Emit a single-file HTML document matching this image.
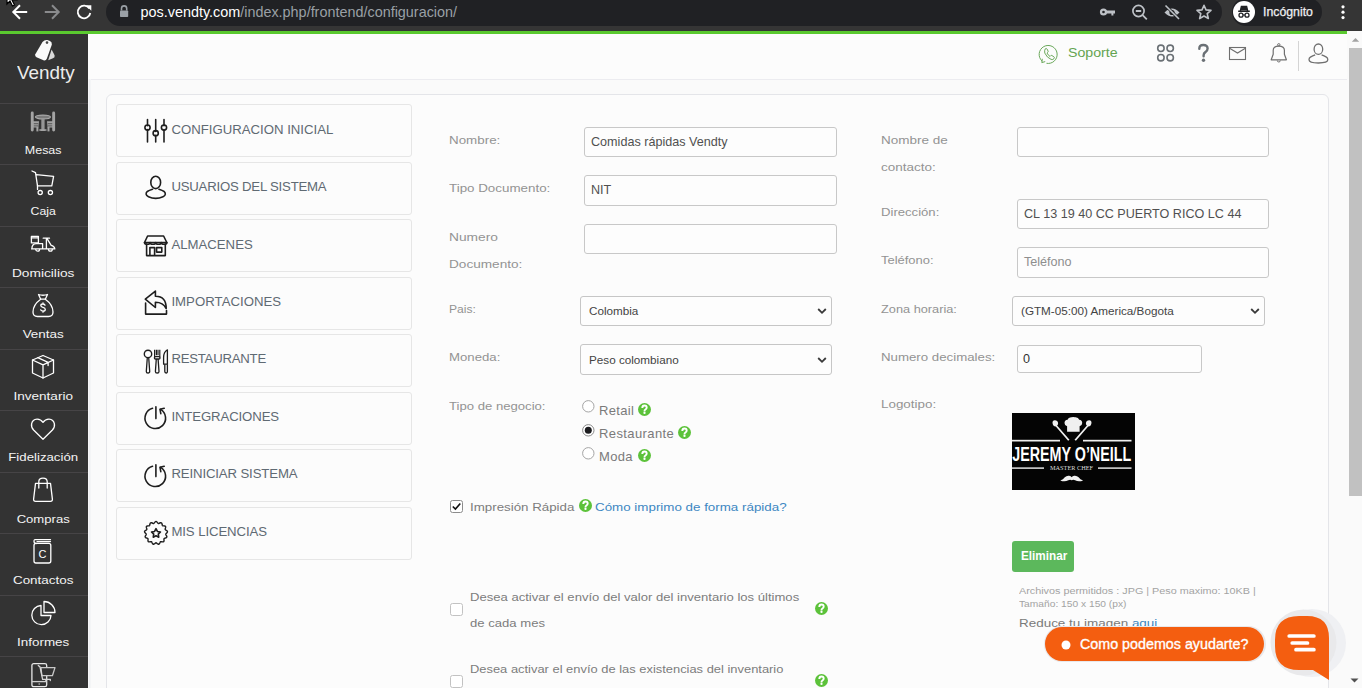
<!DOCTYPE html>
<html><head><meta charset="utf-8"><title>Vendty</title>
<style>
*{box-sizing:border-box;margin:0;padding:0}
html,body{width:1362px;height:688px;overflow:hidden;background:#fafafa;font-family:"Liberation Sans",sans-serif;position:relative}
.r{position:absolute;display:block}
.t{position:absolute;white-space:nowrap}
svg.r{overflow:visible}
</style></head><body>
<div class="r" style="left:0px;top:0px;width:1362px;height:31px;background:#353535"></div>
<div class="r" style="left:106px;top:-2px;width:1116px;height:28px;background:#202124;border-radius:14px"></div>
<svg class="r" style="left:8px;top:0px;" width="24" height="24" viewBox="0 0 24 24"><path d="M19.2 12H5.5M12 5.3L5.3 12 12 18.7" fill="none" stroke="#fff" stroke-width="2"/></svg>
<svg class="r" style="left:40px;top:0px;" width="24" height="24" viewBox="0 0 24 24"><path d="M4.8 12h13.7M12 5.3l6.7 6.7L12 18.7" fill="none" stroke="#8a8b8d" stroke-width="2"/></svg>
<svg class="r" style="left:72px;top:0px;" width="24" height="24" viewBox="0 0 24 24"><path d="M17.4 8.6A6.3 6.3 0 1 0 18.3 13" fill="none" stroke="#fff" stroke-width="1.8"/><path d="M13.8 5.2h5.5v5.5z" fill="#fff"/></svg>
<svg class="r" style="left:2px;top:-9px;" width="16" height="16" viewBox="0 0 16 16"><path d="M5 0v13l3-3 2.5 5 2-1-2.5-5h4.5z" fill="#fff" stroke="#000" stroke-width="1.2"/></svg>
<svg class="r" style="left:118px;top:4px;" width="12" height="14" viewBox="0 0 12 14"><path d="M3.5 6.5V4.5a2.6 2.6 0 0 1 5.2 0v2" fill="none" stroke="#9aa0a6" stroke-width="1.6"/><rect x="2" y="6.5" width="8.2" height="6.6" rx="0.8" fill="#9aa0a6"/></svg>
<div class="t" style="left:140.5px;top:5.31px;font-size:14.4px;line-height:14.4px;color:#9aa0a6;letter-spacing:0px;font-weight:400;"><span style="color:#fff">pos.vendty.com</span>/index.php/frontend/configuracion/</div>
<svg class="r" style="left:1098px;top:2.5px;" width="20" height="18" viewBox="0 0 20 18"><circle cx="5.5" cy="9" r="3.6" fill="#bdc1c6"/><path d="M8 7.6h9v3h-1.6v2h-2v-2H8z" fill="#bdc1c6"/><circle cx="5.5" cy="9" r="1.3" fill="#202124"/></svg>
<svg class="r" style="left:1130px;top:1.5px;" width="20" height="20" viewBox="0 0 20 20"><circle cx="8.5" cy="9" r="5.6" fill="none" stroke="#bdc1c6" stroke-width="1.7"/><path d="M5.8 9h5.4M12.6 13.2l4.2 4.2" stroke="#bdc1c6" stroke-width="1.8"/></svg>
<svg class="r" style="left:1162px;top:1.5px;" width="20" height="20" viewBox="0 0 20 20"><path d="M2.5 10.5Q10 2.5 17.5 10.5Q10 18.5 2.5 10.5z" fill="#bdc1c6"/><circle cx="10" cy="10.5" r="2.6" fill="#202124"/><path d="M3.5 3.5l13.5 13.5" stroke="#202124" stroke-width="3"/><path d="M3.5 3.5l13.5 13.5" stroke="#bdc1c6" stroke-width="1.6"/></svg>
<svg class="r" style="left:1193px;top:1px;" width="22" height="22" viewBox="0 0 22 22"><path d="M11 4.3l2 4.6 5 .45-3.8 3.3 1.15 4.9L11 15l-4.35 2.55 1.15-4.9-3.8-3.3 5-.45z" fill="none" stroke="#bdc1c6" stroke-width="1.6" stroke-linejoin="round"/></svg>
<div class="r" style="left:1232px;top:-2px;width:90px;height:28px;background:#202124;border-radius:14px"></div>
<svg class="r" style="left:1233px;top:1px;" width="22" height="22" viewBox="0 0 22 22"><circle cx="11" cy="11" r="11" fill="#fff"/><path d="M5.2 10.2h11.6M7.4 9.6l1-4.2h5.2l1 4.2" stroke="#202124" stroke-width="1.4" fill="#202124"/><circle cx="8" cy="14.2" r="2" fill="none" stroke="#202124" stroke-width="1.3"/><circle cx="14" cy="14.2" r="2" fill="none" stroke="#202124" stroke-width="1.3"/><path d="M10 14h2" stroke="#202124" stroke-width="1.2"/></svg>
<div class="t" style="left:1263px;top:5.79px;font-size:12.3px;line-height:12.3px;color:#eeeff1;letter-spacing:0px;font-weight:400;-webkit-text-stroke:0.25px #eeeff1;">Incógnito</div>
<svg class="r" style="left:1338.5px;top:0px;" width="8" height="24" viewBox="0 0 8 24"><circle cx="4" cy="6.8" r="1.6" fill="#fff"/><circle cx="4" cy="12.2" r="1.6" fill="#fff"/><circle cx="4" cy="17.6" r="1.6" fill="#fff"/></svg>
<div class="r" style="left:0px;top:31px;width:1347px;height:3px;background:#5ac92f"></div>
<div class="r" style="left:1347px;top:31px;width:15px;height:3px;background:#fafafa"></div>
<div class="r" style="left:88px;top:34px;width:1259px;height:654px;background:#fafafa"></div>
<div class="r" style="left:88px;top:34px;width:1259px;height:45px;background:#fcfcfc"></div>
<div class="r" style="left:88px;top:79px;width:1259px;height:1px;background:#ececf0"></div>
<div class="r" style="left:106px;top:94px;width:1223px;height:620px;border:1px solid #e4e5e9;border-radius:6px;background:#fcfcfc"></div>
<div class="r" style="left:88px;top:79px;width:3px;height:609px;background:linear-gradient(90deg,#fafafa,#eceef1 60%,#fafafa)"></div>
<div class="r" style="left:1347px;top:31px;width:15px;height:657px;background:#fafafa"></div>
<div class="r" style="left:1349px;top:48px;width:13px;height:448px;background:#c1c1c1"></div>
<svg class="r" style="left:1348px;top:32px;" width="15" height="14" viewBox="0 0 15 14"><path d="M3.8 9.8L7.5 6.1 11.2 9.8z" fill="#a3a3a3"/></svg>
<svg class="r" style="left:1347px;top:674px;" width="15" height="14" viewBox="0 0 15 14"><path d="M3.5 4.5L7.5 8.5 11.5 4.5z" fill="#505050"/></svg>
<div class="r" style="left:0px;top:34px;width:88px;height:654px;background:#333333"></div>
<svg class="r" style="left:33px;top:38px;" width="26" height="26" viewBox="0 0 26 26"><path d="M18.6 11.5L21.6 17.2Q22.2 19.5 20 20.3L15.2 22.3z" fill="#d9d9d9"/><path d="M9.5 4Q11.5 1.6 14.3 2L17 3Q19.3 4.2 18.8 6.8L13.8 20.8Q12.8 23 10.5 22.3L3.5 19.3Q1.6 18.4 2.3 16.3z" fill="#fafafa"/><circle cx="14" cy="4.6" r="1.3" fill="#444"/></svg>
<div class="t" id="t3" style="left:17px;top:63.72px;font-size:18.4px;line-height:18.4px;color:#ececec;letter-spacing:0px;font-weight:400;transform-origin:0 0;transform:scaleX(1.0276)">Vendty</div>
<div class="r" style="left:0px;top:103px;width:88px;height:1px;background:#464446"></div>
<div class="t" id="t4" style="left:0;width:86.4px;text-align:center;top:144.57px;font-size:11.5px;line-height:11.5px;color:#f4f4f4;transform-origin:50% 0;transform:scaleX(1.0834)">Mesas</div>
<div class="r" style="left:0px;top:164px;width:88px;height:1px;background:#464446"></div>
<div class="t" id="t5" style="left:0;width:86.4px;text-align:center;top:205.57px;font-size:11.5px;line-height:11.5px;color:#f4f4f4;transform-origin:50% 0;transform:scaleX(1.0653)">Caja</div>
<div class="r" style="left:0px;top:226px;width:88px;height:1px;background:#464446"></div>
<div class="t" id="t6" style="left:0;width:86.4px;text-align:center;top:267.57px;font-size:11.5px;line-height:11.5px;color:#f4f4f4;transform-origin:50% 0;transform:scaleX(1.1926)">Domicilios</div>
<div class="r" style="left:0px;top:287px;width:88px;height:1px;background:#464446"></div>
<div class="t" id="t7" style="left:0;width:86.4px;text-align:center;top:328.57px;font-size:11.5px;line-height:11.5px;color:#f4f4f4;transform-origin:50% 0;transform:scaleX(1.1685)">Ventas</div>
<div class="r" style="left:0px;top:349px;width:88px;height:1px;background:#464446"></div>
<div class="t" id="t8" style="left:0;width:86.4px;text-align:center;top:390.57px;font-size:11.5px;line-height:11.5px;color:#f4f4f4;transform-origin:50% 0;transform:scaleX(1.1798)">Inventario</div>
<div class="r" style="left:0px;top:410px;width:88px;height:1px;background:#464446"></div>
<div class="t" id="t9" style="left:0;width:86.4px;text-align:center;top:451.57px;font-size:11.5px;line-height:11.5px;color:#f4f4f4;transform-origin:50% 0;transform:scaleX(1.1493)">Fidelización</div>
<div class="r" style="left:0px;top:472px;width:88px;height:1px;background:#464446"></div>
<div class="t" id="t10" style="left:0;width:86.4px;text-align:center;top:513.57px;font-size:11.5px;line-height:11.5px;color:#f4f4f4;transform-origin:50% 0;transform:scaleX(1.1381)">Compras</div>
<div class="r" style="left:0px;top:533px;width:88px;height:1px;background:#464446"></div>
<div class="t" id="t11" style="left:0;width:86.4px;text-align:center;top:574.57px;font-size:11.5px;line-height:11.5px;color:#f4f4f4;transform-origin:50% 0;transform:scaleX(1.1684)">Contactos</div>
<div class="r" style="left:0px;top:595px;width:88px;height:1px;background:#464446"></div>
<div class="t" id="t12" style="left:0;width:86.4px;text-align:center;top:636.57px;font-size:11.5px;line-height:11.5px;color:#f4f4f4;transform-origin:50% 0;transform:scaleX(1.1665)">Informes</div>
<div class="r" style="left:0px;top:656px;width:88px;height:1px;background:#464446"></div>
<svg class="r" style="left:30px;top:110px;" width="26" height="23" viewBox="0 0 26 23"><g fill="#a4a4a4"><ellipse cx="12.9" cy="7" rx="7.5" ry="1.9" fill="#7a7a7a" stroke="#a8a8a8" stroke-width="1.2"/><rect x="11.3" y="8.5" width="3.3" height="11" fill="#959595"/><ellipse cx="12.9" cy="20" rx="3.9" ry="1.1"/><rect x="0.8" y="1.5" width="2.9" height="20" rx="1.4"/><path d="M2 11.2h7l-.6 6.3H2z"/><rect x="6.4" y="17" width="2" height="4.4"/><rect x="22.2" y="1.5" width="2.9" height="20" rx="1.4"/><path d="M24 11.2h-7l.6 6.3H24z"/><rect x="17.5" y="17" width="2" height="4.4"/></g><g fill="#4a4a4a"><rect x="3.8" y="13.3" width="4.5" height="0.9"/><rect x="17.7" y="13.3" width="4.5" height="0.9"/><rect x="3.8" y="15.5" width="4.5" height="0.8"/><rect x="17.7" y="15.5" width="4.5" height="0.8"/></g></svg>
<svg class="r" style="left:30px;top:169px;" width="26" height="28" viewBox="0 0 26 28"><path d="M2 2l3.5 1.6 2 13.2h14.3l1.8-9.4L6.3 5.6" stroke="#fff" stroke-width="1.3" fill="none" stroke-linejoin="round" stroke-linecap="round"/><path d="M7.5 16.8v3.6" stroke="#fff" stroke-width="1.3" fill="none" stroke-linejoin="round" stroke-linecap="round"/><circle cx="10.2" cy="23.6" r="2.1" stroke="#fff" stroke-width="1.3" fill="none" stroke-linejoin="round" stroke-linecap="round"/><circle cx="20.4" cy="23.6" r="2.1" stroke="#fff" stroke-width="1.3" fill="none" stroke-linejoin="round" stroke-linecap="round"/></svg>
<svg class="r" style="left:30px;top:234px;" width="26" height="21" viewBox="0 0 26 21"><rect x="1.4" y="2.3" width="7" height="6.6" stroke="#fff" stroke-width="1.3" fill="none" stroke-linejoin="round" stroke-linecap="round"/><path d="M1.4 3.9h7" stroke="#fff" stroke-width="1.3" fill="none" stroke-linejoin="round" stroke-linecap="round"/><path d="M1.9 14.9Q1.9 9.7 6.2 9.7H12.6V14.9M1.6 14.9H24.8M16.4 14.9V4.3M13.2 4.2H19.5M17.2 4.8L21.2 11.4Q24.4 12.1 24.8 14.9" stroke="#fff" stroke-width="1.3" fill="none" stroke-linejoin="round" stroke-linecap="round"/><path d="M5.8 15.3a1.9 1.9 0 0 0 3.8 0M18.5 15.3a1.9 1.9 0 0 0 3.8 0" stroke="#fff" stroke-width="1.3" fill="none" stroke-linejoin="round" stroke-linecap="round"/></svg>
<svg class="r" style="left:31px;top:292px;" width="24" height="28" viewBox="0 0 24 28"><path d="M7.5 2.5q4.5 1.5 9 0l-2.2 4.7h-4.6z" stroke="#fff" stroke-width="1.3" fill="none" stroke-linejoin="round" stroke-linecap="round"/><path d="M9.7 7.2q-7.7 5.5-7.7 12.8q0 4.5 4.5 4.5h11q4.5 0 4.5-4.5q0-7.3-7.7-12.8" stroke="#fff" stroke-width="1.3" fill="none" stroke-linejoin="round" stroke-linecap="round"/><path d="M14 13.2q-.8-1.2-2.2-1.2q-2 0-2 1.6q0 1.3 2.2 1.8q2.3.5 2.3 2q0 1.7-2.3 1.7q-1.5 0-2.3-1.2M12 10.8v1.2M12 18.9v1.3" stroke="#fff" stroke-width="1.3" fill="none" stroke-linejoin="round" stroke-linecap="round"/></svg>
<svg class="r" style="left:30px;top:353px;" width="26" height="29" viewBox="0 0 26 29"><path d="M13 2.5l10.5 4.5v13l-10.5 5-10.5-5V7z" stroke="#fff" stroke-width="1.3" fill="none" stroke-linejoin="round" stroke-linecap="round"/><path d="M2.5 7l10.5 4.8 10.5-4.8M13 11.8v13.2M7.8 4.7l10.3 4.6v3.2" stroke="#fff" stroke-width="1.3" fill="none" stroke-linejoin="round" stroke-linecap="round"/></svg>
<svg class="r" style="left:30px;top:417px;" width="26" height="25" viewBox="0 0 26 25"><path d="M13 22.3L3.6 13Q1 10.2 1.6 6.8Q2.5 2.3 7 2.1q3.7-.1 6 3.3q2.3-3.4 6-3.3q4.5.2 5.4 4.7q.6 3.4-2 6.2z" stroke="#fff" stroke-width="1.3" fill="none" stroke-linejoin="round" stroke-linecap="round"/></svg>
<svg class="r" style="left:30px;top:476px;" width="26" height="29" viewBox="0 0 26 29"><path d="M5.5 7.3h15l1.9 15.8q.2 2.2-2 2.2H5.6q-2.2 0-2-2.2z" stroke="#fff" stroke-width="1.3" fill="none" stroke-linejoin="round" stroke-linecap="round"/><path d="M8.8 12V5.8q0-3.6 4.2-3.6t4.2 3.6V12" stroke="#fff" stroke-width="1.3" fill="none" stroke-linejoin="round" stroke-linecap="round"/></svg>
<svg class="r" style="left:30px;top:538px;" width="26" height="28" viewBox="0 0 26 28"><path d="M6.3 5.5q-2.3 0-2.3-2.2t2.3-1.6h14.2M7 3.6h13.5" stroke="#fff" stroke-width="1.3" fill="none" stroke-linejoin="round" stroke-linecap="round"/><rect x="4" y="5.4" width="16.8" height="19.6" rx="2" stroke="#fff" stroke-width="1.3" fill="none" stroke-linejoin="round" stroke-linecap="round"/><text x="12.4" y="19.6" font-family="Liberation Sans" font-size="11" fill="#fff" text-anchor="middle">C</text></svg>
<svg class="r" style="left:29px;top:599px;" width="28" height="29" viewBox="0 0 28 29"><path d="M12 6.5a9.6 9.6 0 1 0 10 10H12z" stroke="#fff" stroke-width="1.3" fill="none" stroke-linejoin="round" stroke-linecap="round"/><path d="M15 2.5v11h11a11 11 0 0 0-11-11z" stroke="#fff" stroke-width="1.3" fill="none" stroke-linejoin="round" stroke-linecap="round"/></svg>
<svg class="r" style="left:29px;top:661px;" width="28" height="28" viewBox="0 0 28 28"><rect x="2.9" y="2.7" width="14.8" height="23" rx="1.8" fill="none" stroke="#e6e6e6" stroke-width="1.3"/><path d="M2.9 20.6h14.8" stroke="#d0d0d0" stroke-width="1.3"/><circle cx="10.2" cy="23" r="0.8" fill="#bbb"/><path d="M11.9 6.6H26l-2.6 8.1H12.9z" fill="#333" stroke="#c9c9c9" stroke-width="1.3" stroke-linejoin="round"/><path d="M9.3 4.5l1.7 1.4 2.6 12.4h7.8M16.8 18.3v1.2M21.3 18.3v1.2" fill="none" stroke="#d6d6d6" stroke-width="1.3" stroke-linecap="round"/></svg>
<svg class="r" style="left:1037px;top:42px;" width="24" height="24" viewBox="0 0 24 24"><path d="M5.2 19.2A9 9 0 1 1 9.5 21.3" fill="none" stroke="#6aa85a" stroke-width="1"/><path d="M5.3 16.8l-.5 3.8 3.4-1" fill="none" stroke="#6aa85a" stroke-width="1"/><path d="M8.3 6.8q1.2-.8 1.8.3l1 2q.3.8-.5 1.4l-.6.5q.8 2 3 3.4l.6-.6q.6-.7 1.4-.2l1.9 1.2q.9.7.2 1.7q-1.2 1.6-3 .9q-4.2-1.7-6.3-6.3q-.6-2.6 .5-4.3z" fill="none" stroke="#6aa85a" stroke-width="1"/></svg>
<div class="t" id="t13" style="left:1068.0px;top:47.30px;font-size:12.4px;line-height:12.4px;color:#64a451;letter-spacing:0px;font-weight:400;transform-origin:0 0;transform:scaleX(1.1427)">Soporte</div>
<svg class="r" style="left:1155px;top:43px;" width="22" height="22" viewBox="0 0 22 22"><g fill="none" stroke="#6a7075" stroke-width="1.6"><circle cx="5.9" cy="5.3" r="3.2"/><circle cx="15.2" cy="5.3" r="3.2"/><circle cx="5.9" cy="14.7" r="3.2"/><circle cx="15.2" cy="14.7" r="3.2"/></g></svg>
<svg class="r" style="left:1195px;top:42px;" width="16" height="22" viewBox="0 0 16 22"><path d="M4.3 6.8q0-3.8 4-3.8q4.3 0 4.3 3.6q0 2.2-2.2 3.5q-1.8 1.1-1.8 3.2v.9" fill="none" stroke="#6a7075" stroke-width="2.4" stroke-linecap="round"/><circle cx="8.5" cy="18.3" r="1.7" fill="#6a7075"/></svg>
<svg class="r" style="left:1227px;top:45px;" width="22" height="17" viewBox="0 0 22 17"><rect x="2.5" y="2.5" width="16" height="12" fill="none" stroke="#6f6f6f" stroke-width="1.1"/><path d="M2.6 3.2l7.9 4.8 7.9-4.8" fill="none" stroke="#6f6f6f" stroke-width="1.1"/></svg>
<svg class="r" style="left:1268px;top:42px;" width="22" height="24" viewBox="0 0 22 24"><path d="M3.2 17.8l2-5.5v-4q0-4.2 5.6-4.2t5.6 4.2v4l2 5.5z" fill="none" stroke="#6f6f6f" stroke-width="1.2" stroke-linejoin="round"/><circle cx="10.8" cy="2.8" r="1.2" fill="none" stroke="#6f6f6f" stroke-width="1"/><path d="M9.3 18.5a1.5 1.5 0 0 0 3 0" fill="none" stroke="#6f6f6f" stroke-width="1"/></svg>
<div class="r" style="left:1298px;top:41px;width:1px;height:30px;background:#d4d4d4"></div>
<svg class="r" style="left:1306px;top:42px;" width="24" height="24" viewBox="0 0 24 24"><ellipse cx="12.4" cy="7.2" rx="4.3" ry="5.2" fill="none" stroke="#6f6f6f" stroke-width="1.3"/><path d="M9.2 12.9q-2.6 1-4.8 2.2q-1.4.8-1.4 2.7q0 3.2 9.4 3.2t9.4-3.2q0-1.9-1.4-2.7q-2.2-1.2-4.8-2.2" fill="none" stroke="#6f6f6f" stroke-width="1.3"/></svg>
<div class="r" style="left:116px;top:104px;width:296px;height:53px;border:1px solid #e6e6e6;border-radius:3px;background:#fcfcfc"></div>
<div class="t" style="left:171.4px;top:122.73px;font-size:13.2px;line-height:13.2px;color:#5f6a73;letter-spacing:0px;font-weight:400;">CONFIGURACION INICIAL</div>
<div class="r" style="left:116px;top:162px;width:296px;height:53px;border:1px solid #e6e6e6;border-radius:3px;background:#fcfcfc"></div>
<div class="t" style="left:171.4px;top:180.16px;font-size:13.2px;line-height:13.2px;color:#5f6a73;letter-spacing:-0.21px;font-weight:400;">USUARIOS DEL SISTEMA</div>
<div class="r" style="left:116px;top:219px;width:296px;height:53px;border:1px solid #e6e6e6;border-radius:3px;background:#fcfcfc"></div>
<div class="t" style="left:171.4px;top:237.59px;font-size:13.2px;line-height:13.2px;color:#5f6a73;letter-spacing:0px;font-weight:400;">ALMACENES</div>
<div class="r" style="left:116px;top:277px;width:296px;height:53px;border:1px solid #e6e6e6;border-radius:3px;background:#fcfcfc"></div>
<div class="t" style="left:171.4px;top:295.02px;font-size:13.2px;line-height:13.2px;color:#5f6a73;letter-spacing:0.03px;font-weight:400;">IMPORTACIONES</div>
<div class="r" style="left:116px;top:334px;width:296px;height:53px;border:1px solid #e6e6e6;border-radius:3px;background:#fcfcfc"></div>
<div class="t" style="left:171.4px;top:352.45px;font-size:13.2px;line-height:13.2px;color:#5f6a73;letter-spacing:-0.24px;font-weight:400;">RESTAURANTE</div>
<div class="r" style="left:116px;top:392px;width:296px;height:53px;border:1px solid #e6e6e6;border-radius:3px;background:#fcfcfc"></div>
<div class="t" style="left:171.4px;top:409.88px;font-size:13.2px;line-height:13.2px;color:#5f6a73;letter-spacing:-0.12px;font-weight:400;">INTEGRACIONES</div>
<div class="r" style="left:116px;top:449px;width:296px;height:53px;border:1px solid #e6e6e6;border-radius:3px;background:#fcfcfc"></div>
<div class="t" style="left:171.4px;top:467.31px;font-size:13.2px;line-height:13.2px;color:#5f6a73;letter-spacing:-0.13px;font-weight:400;">REINICIAR SISTEMA</div>
<div class="r" style="left:116px;top:507px;width:296px;height:53px;border:1px solid #e6e6e6;border-radius:3px;background:#fcfcfc"></div>
<div class="t" style="left:171.4px;top:524.74px;font-size:13.2px;line-height:13.2px;color:#5f6a73;letter-spacing:-0.09px;font-weight:400;">MIS LICENCIAS</div>
<svg class="r" style="left:144px;top:118.5px;overflow:visible" width="25" height="25" viewBox="0 0 25 25"><path d="M3.5 0.5v6.2M3.5 10.5v12.5M11.7 0.5v12M11.7 16.2v6.8M20 0.5v6.2M20 10.5v12.5" fill="none" stroke="#1e1e1e" stroke-width="1.6" stroke-linecap="round" stroke-linejoin="round"/><circle cx="3.5" cy="8.6" r="2.6" fill="none" stroke="#1e1e1e" stroke-width="1.6" stroke-linecap="round" stroke-linejoin="round"/><circle cx="11.7" cy="14.2" r="2.6" fill="none" stroke="#1e1e1e" stroke-width="1.6" stroke-linecap="round" stroke-linejoin="round"/><circle cx="20" cy="8.6" r="2.6" fill="none" stroke="#1e1e1e" stroke-width="1.6" stroke-linecap="round" stroke-linejoin="round"/></svg>
<svg class="r" style="left:144px;top:176px;overflow:visible" width="25" height="25" viewBox="0 0 25 25"><ellipse cx="11.7" cy="6.4" rx="4.9" ry="6.2" fill="none" stroke="#1e1e1e" stroke-width="1.6" stroke-linecap="round" stroke-linejoin="round"/><path d="M8.5 13.3Q5 14.5 3.3 15.5Q2 16.3 2.1 18.2Q2.3 19.8 4.5 20.8Q8 22.4 11.7 22.4T19 20.8Q21.2 19.8 21.3 18.2Q21.4 16.3 20.1 15.5Q18.4 14.5 15 13.3" fill="none" stroke="#1e1e1e" stroke-width="1.6" stroke-linecap="round" stroke-linejoin="round"/></svg>
<svg class="r" style="left:144px;top:233.5px;overflow:visible" width="25" height="25" viewBox="0 0 25 25"><path d="M3.6 2h16l3.2 6.5H0.5z" fill="none" stroke="#1e1e1e" stroke-width="1.6" stroke-linecap="round" stroke-linejoin="round"/><path d="M0.5 8.5q0 1.8 2.8 1.8t2.8-1.8q0 1.8 2.8 1.8t2.8-1.8q0 1.8 2.8 1.8t2.8-1.8q0 1.8 2.8 1.8t2.8-1.8" fill="none" stroke="#1e1e1e" stroke-width="1.6" stroke-linecap="round" stroke-linejoin="round"/><path d="M2.6 10v11.6h18.7V10M5.9 21.6v-8h4.7v8M12.6 13.6h5.2v4.5h-5.2z" fill="none" stroke="#1e1e1e" stroke-width="1.6" stroke-linecap="round" stroke-linejoin="round"/></svg>
<svg class="r" style="left:144px;top:291px;overflow:visible" width="25" height="25" viewBox="0 0 25 25"><path d="M1.3 8.2L11.4 0.1v5.2q10.8-.2 10.8 12.3q-3-6.3-10.8-6.3v5.2z" fill="none" stroke="#1e1e1e" stroke-width="1.6" stroke-linecap="round" stroke-linejoin="round"/><path d="M1.6 12v11.1h20.9v-3.6" fill="none" stroke="#1e1e1e" stroke-width="1.6" stroke-linecap="round" stroke-linejoin="round"/></svg>
<svg class="r" style="left:144px;top:348.5px;overflow:visible" width="25" height="25" viewBox="0 0 25 25"><circle cx="4" cy="4.9" r="3.7" fill="none" stroke="#1e1e1e" stroke-width="1.4"/><path d="M3.3 8.7L2.3 22.4Q2.3 24 4 24T5.7 22.4L4.7 8.7" fill="none" stroke="#1e1e1e" stroke-width="1.3" stroke-linejoin="round"/><path d="M10.6 0.8v7.4M15.8 0.8v7.4M12.4 0.8v5.5M14 0.8v5.5" fill="none" stroke="#1e1e1e" stroke-width="1.2"/><rect x="10.4" y="7.6" width="5.6" height="2.4" rx="1.1" fill="none" stroke="#1e1e1e" stroke-width="1.3"/><path d="M12.3 10L11.4 22.4Q11.4 24 13.2 24T15 22.4L14.1 10" fill="none" stroke="#1e1e1e" stroke-width="1.3" stroke-linejoin="round"/><path d="M23.4 0.8Q19.6 3 19.6 8.5V15.2H23.4z" fill="none" stroke="#1e1e1e" stroke-width="1.3" stroke-linejoin="round"/><path d="M20.8 15.2V22.6Q20.8 24 22.1 24T23.4 22.6V15.2" fill="none" stroke="#1e1e1e" stroke-width="1.3" stroke-linejoin="round"/></svg>
<svg class="r" style="left:144px;top:406px;overflow:visible" width="25" height="25" viewBox="0 0 25 25"><path d="M11.9 0.8v11.8" fill="none" stroke="#1e1e1e" stroke-width="1.6" stroke-linecap="round" stroke-linejoin="round"/><path d="M8.5 2.3A10.3 10.3 0 1 0 16.6 3.4" fill="none" stroke="#1e1e1e" stroke-width="1.6" stroke-linecap="round" stroke-linejoin="round"/><path d="M20.2 2.3l-4.2 1 .8 4.3" fill="none" stroke="#1e1e1e" stroke-width="1.6" stroke-linecap="round" stroke-linejoin="round"/></svg>
<svg class="r" style="left:144px;top:463.5px;overflow:visible" width="25" height="25" viewBox="0 0 25 25"><path d="M11.9 0.8v11.8" fill="none" stroke="#1e1e1e" stroke-width="1.6" stroke-linecap="round" stroke-linejoin="round"/><path d="M8.5 2.3A10.3 10.3 0 1 0 16.6 3.4" fill="none" stroke="#1e1e1e" stroke-width="1.6" stroke-linecap="round" stroke-linejoin="round"/><path d="M20.2 2.3l-4.2 1 .8 4.3" fill="none" stroke="#1e1e1e" stroke-width="1.6" stroke-linecap="round" stroke-linejoin="round"/></svg>
<svg class="r" style="left:144px;top:521px;overflow:visible" width="25" height="25" viewBox="0 0 25 25"><path d="M12.00 0.45 L12.46 0.57 L12.90 0.91 L13.29 1.38 L13.65 1.86 L13.99 2.24 L14.36 2.44 L14.77 2.43 L15.25 2.25 L15.79 2.00 L16.36 1.77 L16.90 1.67 L17.37 1.77 L17.72 2.10 L17.95 2.60 L18.08 3.19 L18.17 3.79 L18.30 4.28 L18.53 4.63 L18.90 4.81 L19.41 4.88 L20.01 4.90 L20.62 4.96 L21.14 5.13 L21.51 5.44 L21.67 5.89 L21.63 6.44 L21.47 7.03 L21.28 7.60 L21.17 8.09 L21.21 8.51 L21.45 8.84 L21.87 9.14 L22.39 9.44 L22.90 9.77 L23.29 10.17 L23.47 10.61 L23.40 11.08 L23.12 11.55 L22.70 12.00 L22.27 12.41 L21.93 12.80 L21.78 13.19 L21.83 13.60 L22.07 14.06 L22.39 14.56 L22.69 15.10 L22.85 15.62 L22.80 16.10 L22.52 16.48 L22.05 16.77 L21.47 16.97 L20.90 17.14 L20.42 17.33 L20.11 17.60 L19.97 17.99 L19.96 18.50 L20.01 19.10 L20.02 19.71 L19.92 20.25 L19.66 20.65 L19.23 20.86 L18.68 20.89 L18.08 20.81 L17.49 20.68 L16.98 20.63 L16.58 20.72 L16.27 21.00 L16.03 21.45 L15.79 22.00 L15.52 22.55 L15.18 22.98 L14.76 23.21 L14.29 23.21 L13.78 22.98 L13.29 22.62 L12.83 22.24 L12.40 21.96 L12.00 21.85 L11.60 21.96 L11.17 22.24 L10.71 22.62 L10.22 22.98 L9.71 23.21 L9.24 23.21 L8.82 22.98 L8.48 22.55 L8.21 22.00 L7.97 21.45 L7.73 21.00 L7.42 20.72 L7.02 20.63 L6.51 20.68 L5.92 20.81 L5.32 20.89 L4.77 20.86 L4.34 20.65 L4.08 20.25 L3.98 19.71 L3.99 19.10 L4.04 18.50 L4.03 17.99 L3.89 17.60 L3.58 17.33 L3.10 17.14 L2.53 16.97 L1.95 16.77 L1.48 16.48 L1.20 16.10 L1.15 15.62 L1.31 15.10 L1.61 14.56 L1.93 14.06 L2.17 13.60 L2.22 13.19 L2.07 12.80 L1.73 12.41 L1.30 12.00 L0.88 11.55 L0.60 11.08 L0.53 10.61 L0.71 10.17 L1.10 9.77 L1.61 9.44 L2.13 9.14 L2.55 8.84 L2.79 8.51 L2.83 8.09 L2.72 7.60 L2.53 7.03 L2.37 6.44 L2.33 5.89 L2.49 5.44 L2.86 5.13 L3.38 4.96 L3.99 4.90 L4.59 4.88 L5.10 4.81 L5.47 4.63 L5.70 4.28 L5.83 3.79 L5.92 3.19 L6.05 2.60 L6.28 2.10 L6.63 1.77 L7.10 1.67 L7.64 1.77 L8.21 2.00 L8.75 2.25 L9.23 2.43 L9.64 2.44 L10.01 2.24 L10.35 1.86 L10.71 1.38 L11.10 0.91 L11.54 0.57 L12.00 0.45z" fill="none" stroke="#1e1e1e" stroke-width="1.4"/><path d="M12.00 7.70 L13.41 10.46 L16.47 10.95 L14.28 13.14 L14.76 16.20 L12.00 14.80 L9.24 16.20 L9.72 13.14 L7.53 10.95 L10.59 10.46z" fill="none" stroke="#1e1e1e" stroke-width="1.6" stroke-linejoin="round"/></svg>
<div class="t" id="t22" style="left:448.8px;top:134.69px;font-size:11px;line-height:11px;color:#939393;letter-spacing:0px;font-weight:400;transform-origin:0 0;transform:scaleX(1.2160)">Nombre:</div>
<div class="t" id="t23" style="left:448.8px;top:183.09px;font-size:11px;line-height:11px;color:#939393;letter-spacing:0px;font-weight:400;transform-origin:0 0;transform:scaleX(1.2152)">Tipo Documento:</div>
<div class="t" id="t24" style="left:448.8px;top:231.89px;font-size:11px;line-height:11px;color:#939393;letter-spacing:0px;font-weight:400;transform-origin:0 0;transform:scaleX(1.2524)">Numero</div>
<div class="t" id="t25" style="left:448.8px;top:258.69px;font-size:11px;line-height:11px;color:#939393;letter-spacing:0px;font-weight:400;transform-origin:0 0;transform:scaleX(1.2375)">Documento:</div>
<div class="t" id="t26" style="left:448.8px;top:303.69px;font-size:11px;line-height:11px;color:#939393;letter-spacing:0px;font-weight:400;transform-origin:0 0;transform:scaleX(1.0994)">Pais:</div>
<div class="t" id="t27" style="left:448.8px;top:351.69px;font-size:11px;line-height:11px;color:#939393;letter-spacing:0px;font-weight:400;transform-origin:0 0;transform:scaleX(1.1982)">Moneda:</div>
<div class="t" id="t28" style="left:448.8px;top:401.29px;font-size:11px;line-height:11px;color:#939393;letter-spacing:0px;font-weight:400;transform-origin:0 0;transform:scaleX(1.1923)">Tipo de negocio:</div>
<div class="t" id="t29" style="left:881.2px;top:134.69px;font-size:11px;line-height:11px;color:#939393;letter-spacing:0px;font-weight:400;transform-origin:0 0;transform:scaleX(1.2274)">Nombre de</div>
<div class="t" id="t30" style="left:881.2px;top:161.69px;font-size:11px;line-height:11px;color:#939393;letter-spacing:0px;font-weight:400;transform-origin:0 0;transform:scaleX(1.2253)">contacto:</div>
<div class="t" id="t31" style="left:881.2px;top:206.69px;font-size:11px;line-height:11px;color:#939393;letter-spacing:0px;font-weight:400;transform-origin:0 0;transform:scaleX(1.1921)">Dirección:</div>
<div class="t" id="t32" style="left:881.2px;top:254.69px;font-size:11px;line-height:11px;color:#939393;letter-spacing:0px;font-weight:400;transform-origin:0 0;transform:scaleX(1.1779)">Teléfono:</div>
<div class="t" id="t33" style="left:881.2px;top:303.69px;font-size:11px;line-height:11px;color:#939393;letter-spacing:0px;font-weight:400;transform-origin:0 0;transform:scaleX(1.1599)">Zona horaria:</div>
<div class="t" id="t34" style="left:881.2px;top:351.69px;font-size:11px;line-height:11px;color:#939393;letter-spacing:0px;font-weight:400;transform-origin:0 0;transform:scaleX(1.2051)">Numero decimales:</div>
<div class="t" id="t35" style="left:881.2px;top:399.09px;font-size:11px;line-height:11px;color:#939393;letter-spacing:0px;font-weight:400;transform-origin:0 0;transform:scaleX(1.2173)">Logotipo:</div>
<div class="r" style="left:584px;top:127px;width:253px;height:30px;border:1px solid #c8c8c8;border-radius:3px;background:#fdfdfd"></div>
<div class="t" style="left:591px;top:135.93px;font-size:12.6px;line-height:12.6px;color:#505050;letter-spacing:0px;font-weight:400;">Comidas rápidas Vendty</div>
<div class="r" style="left:584px;top:175px;width:253px;height:31px;border:1px solid #c8c8c8;border-radius:3px;background:#fdfdfd"></div>
<div class="t" style="left:591px;top:184.43px;font-size:12.6px;line-height:12.6px;color:#505050;letter-spacing:0px;font-weight:400;">NIT</div>
<div class="r" style="left:584px;top:224px;width:253px;height:30px;border:1px solid #c8c8c8;border-radius:3px;background:#fdfdfd"></div>
<div class="r" style="left:580px;top:296px;width:252px;height:30px;border:1px solid #c6c6c6;border-radius:3px;background:#fdfdfd"></div>
<div class="t" style="left:589px;top:305.00px;font-size:11.7px;line-height:11.7px;color:#444444;letter-spacing:0px;font-weight:400;">Colombia</div>
<svg class="r" style="left:816px;top:306.0px;" width="12" height="10" viewBox="0 0 12 10"><path d="M2.2 3l3.8 3.8L9.8 3" fill="none" stroke="#3a3a3a" stroke-width="1.8"/></svg>
<div class="r" style="left:580px;top:344px;width:252px;height:31px;border:1px solid #c6c6c6;border-radius:3px;background:#fdfdfd"></div>
<div class="t" style="left:589px;top:353.50px;font-size:11.7px;line-height:11.7px;color:#444444;letter-spacing:0px;font-weight:400;">Peso colombiano</div>
<svg class="r" style="left:816px;top:354.5px;" width="12" height="10" viewBox="0 0 12 10"><path d="M2.2 3l3.8 3.8L9.8 3" fill="none" stroke="#3a3a3a" stroke-width="1.8"/></svg>
<div class="r" style="left:1017px;top:127px;width:252px;height:30px;border:1px solid #c8c8c8;border-radius:3px;background:#fdfdfd"></div>
<div class="r" style="left:1017px;top:199px;width:252px;height:30px;border:1px solid #c8c8c8;border-radius:3px;background:#fdfdfd"></div>
<div class="t" style="left:1024px;top:207.93px;font-size:12.6px;line-height:12.6px;color:#505050;letter-spacing:0px;font-weight:400;">CL 13 19 40 CC PUERTO RICO LC 44</div>
<div class="r" style="left:1017px;top:247px;width:252px;height:31px;border:1px solid #c8c8c8;border-radius:3px;background:#fdfdfd"></div>
<div class="t" style="left:1024px;top:256.43px;font-size:12.6px;line-height:12.6px;color:#8e8e8e;letter-spacing:0px;font-weight:400;">Teléfono</div>
<div class="r" style="left:1012px;top:296px;width:253px;height:30px;border:1px solid #c6c6c6;border-radius:3px;background:#fdfdfd"></div>
<div class="t" style="left:1021px;top:305.00px;font-size:11.7px;line-height:11.7px;color:#444444;letter-spacing:0px;font-weight:400;">(GTM-05:00) America/Bogota</div>
<svg class="r" style="left:1249px;top:306.0px;" width="12" height="10" viewBox="0 0 12 10"><path d="M2.2 3l3.8 3.8L9.8 3" fill="none" stroke="#3a3a3a" stroke-width="1.8"/></svg>
<div class="r" style="left:1017px;top:345px;width:185px;height:28px;border:1px solid #c8c8c8;border-radius:3px;background:#fdfdfd"></div>
<div class="t" style="left:1023px;top:352.93px;font-size:12.6px;line-height:12.6px;color:#333;letter-spacing:0px;font-weight:400;">0</div>
<svg class="r" style="left:581.5px;top:400.3px;" width="13" height="13" viewBox="0 0 13 13"><circle cx="6.3" cy="6.3" r="5.7" fill="#fff" stroke="#a5a5a5" stroke-width="1"/></svg>
<div class="t" style="left:599px;top:404.20px;font-size:13px;line-height:13px;color:#7a7a7a;letter-spacing:0.35px;font-weight:400;">Retail</div>
<svg class="r" style="left:638.0px;top:403.0px;" width="13.0" height="13.0" viewBox="0 0 13.0 13.0"><circle cx="6.5" cy="6.5" r="6.5" fill="#5cc23a"/><path d="M4.3 5.0q0-2.5 2.2-2.5t2.2 2.1q0 1.2-1.2 1.9q-1 .6-1 1.6v.5" fill="none" stroke="#fff" stroke-width="1.9"/><circle cx="6.5" cy="9.9" r="1.15" fill="#fff"/></svg>
<svg class="r" style="left:581.5px;top:424px;" width="13" height="13" viewBox="0 0 13 13"><circle cx="6.3" cy="6.3" r="5.7" fill="#fff" stroke="#8a8a8a" stroke-width="1"/><circle cx="6.3" cy="6.3" r="3.5" fill="#1c1c1f"/></svg>
<div class="t" style="left:599px;top:427.20px;font-size:13px;line-height:13px;color:#7a7a7a;letter-spacing:0.4px;font-weight:400;">Restaurante</div>
<svg class="r" style="left:678.0px;top:426.0px;" width="13.0" height="13.0" viewBox="0 0 13.0 13.0"><circle cx="6.5" cy="6.5" r="6.5" fill="#5cc23a"/><path d="M4.3 5.0q0-2.5 2.2-2.5t2.2 2.1q0 1.2-1.2 1.9q-1 .6-1 1.6v.5" fill="none" stroke="#fff" stroke-width="1.9"/><circle cx="6.5" cy="9.9" r="1.15" fill="#fff"/></svg>
<svg class="r" style="left:581.5px;top:447.2px;" width="13" height="13" viewBox="0 0 13 13"><circle cx="6.3" cy="6.3" r="5.7" fill="#fff" stroke="#a5a5a5" stroke-width="1"/></svg>
<div class="t" style="left:599px;top:450.20px;font-size:13px;line-height:13px;color:#7a7a7a;letter-spacing:0.35px;font-weight:400;">Moda</div>
<svg class="r" style="left:638.0px;top:449.0px;" width="13.0" height="13.0" viewBox="0 0 13.0 13.0"><circle cx="6.5" cy="6.5" r="6.5" fill="#5cc23a"/><path d="M4.3 5.0q0-2.5 2.2-2.5t2.2 2.1q0 1.2-1.2 1.9q-1 .6-1 1.6v.5" fill="none" stroke="#fff" stroke-width="1.9"/><circle cx="6.5" cy="9.9" r="1.15" fill="#fff"/></svg>
<svg class="r" style="left:450px;top:500px;" width="13" height="13" viewBox="0 0 13 13"><rect x="0.5" y="0.5" width="12" height="12" rx="2" fill="#fff" stroke="#8c8c8c"/><path d="M2.8 6.5l2.6 2.6 4.9-5.6" fill="none" stroke="#111" stroke-width="1.6"/></svg>
<div class="t" id="t47" style="left:470px;top:502.19px;font-size:11px;line-height:11px;color:#7d7d7d;letter-spacing:0px;font-weight:400;transform-origin:0 0;transform:scaleX(1.2109)">Impresión Rápida</div>
<svg class="r" style="left:578.5px;top:499.0px;" width="13.0" height="13.0" viewBox="0 0 13.0 13.0"><circle cx="6.5" cy="6.5" r="6.5" fill="#5cc23a"/><path d="M4.3 5.0q0-2.5 2.2-2.5t2.2 2.1q0 1.2-1.2 1.9q-1 .6-1 1.6v.5" fill="none" stroke="#fff" stroke-width="1.9"/><circle cx="6.5" cy="9.9" r="1.15" fill="#fff"/></svg>
<div class="t" id="t48" style="left:595.4px;top:502.19px;font-size:11px;line-height:11px;color:#3d87c2;letter-spacing:0px;font-weight:400;transform-origin:0 0;transform:scaleX(1.2147)">Cómo imprimo de forma rápida?</div>
<svg class="r" style="left:450px;top:603px;" width="13" height="13" viewBox="0 0 13 13"><rect x="0.5" y="0.5" width="12" height="12" rx="2" fill="#fff" stroke="#c2c2c2"/></svg>
<div class="t" id="t49" style="left:470px;top:591.69px;font-size:11px;line-height:11px;color:#7d7d7d;letter-spacing:0px;font-weight:400;transform-origin:0 0;transform:scaleX(1.1885)">Desea activar el envío del valor del inventario los últimos</div>
<div class="t" id="t50" style="left:470px;top:618.29px;font-size:11px;line-height:11px;color:#7d7d7d;letter-spacing:0px;font-weight:400;transform-origin:0 0;transform:scaleX(1.1908)">de cada mes</div>
<svg class="r" style="left:815.3px;top:602.1px;" width="13.0" height="13.0" viewBox="0 0 13.0 13.0"><circle cx="6.5" cy="6.5" r="6.5" fill="#5cc23a"/><path d="M4.3 5.0q0-2.5 2.2-2.5t2.2 2.1q0 1.2-1.2 1.9q-1 .6-1 1.6v.5" fill="none" stroke="#fff" stroke-width="1.9"/><circle cx="6.5" cy="9.9" r="1.15" fill="#fff"/></svg>
<svg class="r" style="left:450px;top:675px;" width="13" height="13" viewBox="0 0 13 13"><rect x="0.5" y="0.5" width="12" height="12" rx="2" fill="#fff" stroke="#c2c2c2"/></svg>
<div class="t" id="t51" style="left:470px;top:663.89px;font-size:11px;line-height:11px;color:#7d7d7d;letter-spacing:0px;font-weight:400;transform-origin:0 0;transform:scaleX(1.1729)">Desea activar el envío de las existencias del inventario</div>
<svg class="r" style="left:815.3px;top:673.8px;" width="13.0" height="13.0" viewBox="0 0 13.0 13.0"><circle cx="6.5" cy="6.5" r="6.5" fill="#5cc23a"/><path d="M4.3 5.0q0-2.5 2.2-2.5t2.2 2.1q0 1.2-1.2 1.9q-1 .6-1 1.6v.5" fill="none" stroke="#fff" stroke-width="1.9"/><circle cx="6.5" cy="9.9" r="1.15" fill="#fff"/></svg>
<svg class="r" style="left:1012px;top:413px;" width="123" height="77" viewBox="0 0 123 77"><rect width="123" height="77" fill="#040404"/><g fill="#f0f0f0"><rect x="0" y="26.8" width="48" height="1.7"/><rect x="71" y="26.8" width="48.5" height="1.7"/><rect x="0" y="54.4" width="32" height="1.4"/><rect x="86" y="54.4" width="33.5" height="1.4"/><path d="M52.5 10q0-3 3-3.2q.8-2.8 4.2-2.5q1.3-.8 3.3 0q3.4-.3 4.2 2.5q3 .2 3 3.2q0 2.6-2.6 3.2v5.5H55.1v-5.5q-2.6-.6-2.6-3.2z"/><path d="M40.6 10.5q-.6-3 2.2-3.2q2.8 0 3.3 2.6q.2 1.6-1 2.6l12.4 14.2-1.4 1.1-12.3-14.3q-2.6.2-3.2-3z"/><path d="M79.4 10.5q.6-3-2.2-3.2q-2.8 0-3.3 2.6q-.2 1.6 1 2.6L62.5 26.7l1.4 1.1 12.3-14.3q2.6.2 3.2-3z"/><path d="M48.3 67.5q3-1 4.5-3.2q1.8-2 4.4-1.6q1.8.3 2.5 1.5q.7-1.2 2.5-1.5q2.6-.4 4.4 1.6q1.5 2.2 4.5 3.2q-4.5 1.8-8-.2q-1.8-.9-3.4-.1q-1.6-.8-3.4.1q-3.5 2-8 .2z"/></g><text x="59.7" y="48.3" font-family="Liberation Sans" font-size="20.5" font-weight="700" fill="#fff" text-anchor="middle" textLength="119" lengthAdjust="spacingAndGlyphs">JEREMY O’NEILL</text><text x="59.5" y="57.3" font-family="Liberation Serif" font-size="5.2" fill="#ddd" text-anchor="middle" textLength="43" lengthAdjust="spacingAndGlyphs">MASTER CHEF</text></svg>
<div class="r" style="left:1012px;top:541px;width:62px;height:31px;background:#5cb85c;border-radius:3px"></div>
<div class="t" id="t52" style="left:1020.5px;top:549.49px;font-size:13.6px;line-height:13.6px;color:#fff;letter-spacing:0px;font-weight:700;transform-origin:0 0;transform:scaleX(0.8632)">Eliminar</div>
<div class="t" id="t53" style="left:1019px;top:587.21px;font-size:9.2px;line-height:9.2px;color:#a3a3a3;letter-spacing:0px;font-weight:400;transform-origin:0 0;transform:scaleX(1.1760)">Archivos permitidos : JPG | Peso maximo: 10KB |</div>
<div class="t" id="t54" style="left:1019px;top:600.21px;font-size:9.2px;line-height:9.2px;color:#a3a3a3;letter-spacing:0px;font-weight:400;transform-origin:0 0;transform:scaleX(1.1136)">Tamaño: 150 x 150 (px)</div>
<div class="t" id="t55" style="left:1019px;top:618.49px;font-size:11px;line-height:11px;color:#7a7a7a;letter-spacing:0px;font-weight:400;transform-origin:0 0;transform:scaleX(1.2224)">Reduce tu imagen <span style="color:#3d87c2">aqui</span></div>
<svg class="r" style="left:1262px;top:600px;overflow:visible" width="100" height="88" viewBox="0 0 100 88"><circle cx="50" cy="43" r="34" fill="#eff0f3"/><circle cx="41.5" cy="42.5" r="33" fill="#e9e9eb"/></svg>
<div class="r" style="left:1043.5px;top:625.8px;width:222.2px;height:36.7px;border-radius:18.4px;background:#e8e8eb"></div>
<div class="r" style="left:1045px;top:627.3px;width:219.2px;height:33.7px;border-radius:17px;background:#f45e10"></div>
<svg class="r" style="left:1060.5px;top:639.5px;" width="10" height="10" viewBox="0 0 10 10"><circle cx="5" cy="5" r="4.5" fill="#fff"/></svg>
<div class="t" id="t56" style="left:1079.8px;top:636.54px;font-size:14.6px;line-height:14.6px;color:#fff;letter-spacing:0px;font-weight:400;transform-origin:0 0;-webkit-text-stroke:0.35px #fff;transform:scaleX(0.9797)">Como podemos ayudarte?</div>
<svg class="r" style="left:1275px;top:616px;" width="54" height="65" viewBox="0 0 54 65"><path d="M0 24Q0 0 24 0h8Q54 0 54 22V64L38 54H24Q0 54 0 30z" fill="#f45e10"/><path d="M14.2 20h24.7M17.2 27h15.3M21 33.7h17.9" stroke="#fff" stroke-width="3.7" stroke-linecap="round"/></svg>
</body></html>
